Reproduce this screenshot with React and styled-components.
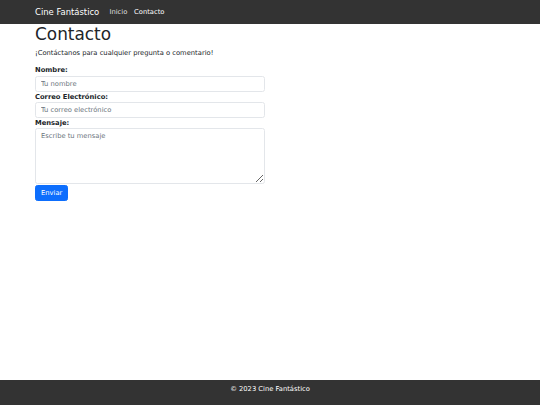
import React from "react";
import styled, { createGlobalStyle } from "styled-components";

const Global = createGlobalStyle`
  html, body { margin: 0; padding: 0; }
  body {
    font-family: "DejaVu Sans", sans-serif;
    font-size: 6.75px;
    line-height: 1.5;
    color: #212529;
    background: #fff;
  }
`;

const Page = styled.div`
  min-height: 405px;
  display: flex;
  flex-direction: column;
`;

const NavBar = styled.nav`
  background: #333;
  padding: 3.4px 35px;
  display: flex;
  align-items: center;
`;

const Brand = styled.a`
  color: #fff;
  font-size: 8.44px;
  line-height: 1.5;
  padding: 2.1px 0;
  margin-right: 6.75px;
  text-decoration: none;
`;

const NavLinks = styled.div`
  display: flex;
`;

const NavLink = styled.a`
  color: ${(p) => (p.$active ? "#fff" : "rgba(255,255,255,0.85)")};
  padding: 3.4px;
  text-decoration: none;
`;

const Main = styled.main`
  flex: 1;
  padding: 0 35px;
`;

const Title = styled.h1`
  font-size: 16.9px;
  font-weight: 400;
  line-height: 1.2;
  margin: 0.5px 0 3.4px;
`;

const Lead = styled.p`
  margin: 0 0 7.5px;
`;

const Form = styled.form`
  width: 230px;
  display: flex;
  flex-direction: column;
`;

const Label = styled.label`
  font-weight: 700;
`;

const fieldBase = `
  box-sizing: border-box;
  width: 100%;
  border: 1px solid #e3e6ea;
  border-radius: 2.5px;
  padding: 2.6px 5px;
  font-family: "DejaVu Sans", sans-serif;
  font-size: 6.75px;
  line-height: 1.5;
  color: #212529;
  background: #fff;
  margin: 0;
  display: block;
`;

const Input = styled.input`
  ${fieldBase}
  height: 16px;
  &::placeholder { color: #6c757d; }
`;

const TextArea = styled.textarea`
  ${fieldBase}
  height: 56.5px;
  resize: vertical;
  &::placeholder { color: #6c757d; }
`;

const Button = styled.button`
  align-self: flex-start;
  background: #0d6efd;
  color: #fff;
  border: 1px solid #0d6efd;
  border-radius: 2.5px;
  height: 16px;
  padding: 0 5px;
  font-family: "DejaVu Sans", sans-serif;
  font-size: 6.75px;
  line-height: 1.5;
  margin-top: 1px;
`;

const Footer = styled.footer`
  background: #333;
  color: #fff;
  padding: 4.2px 0;
  text-align: center;
`;

const FooterText = styled.p`
  margin: 0 0 6.75px;
`;

export default function App() {
  return (
    <Page>
      <Global />
      <NavBar>
        <Brand href="#">Cine Fantástico</Brand>
        <NavLinks>
          <NavLink href="#">Inicio</NavLink>
          <NavLink href="#" $active>Contacto</NavLink>
        </NavLinks>
      </NavBar>
      <Main>
        <Title>Contacto</Title>
        <Lead>¡Contáctanos para cualquier pregunta o comentario!</Lead>
        <Form onSubmit={(e) => e.preventDefault()}>
          <Label htmlFor="nombre">Nombre:</Label>
          <Input id="nombre" placeholder="Tu nombre" />
          <Label htmlFor="correo">Correo Electrónico:</Label>
          <Input id="correo" placeholder="Tu correo electrónico" />
          <Label htmlFor="mensaje">Mensaje:</Label>
          <TextArea id="mensaje" placeholder="Escribe tu mensaje" />
          <Button type="submit">Enviar</Button>
        </Form>
      </Main>
      <Footer>
        <FooterText>© 2023 Cine Fantástico</FooterText>
      </Footer>
    </Page>
  );
}
